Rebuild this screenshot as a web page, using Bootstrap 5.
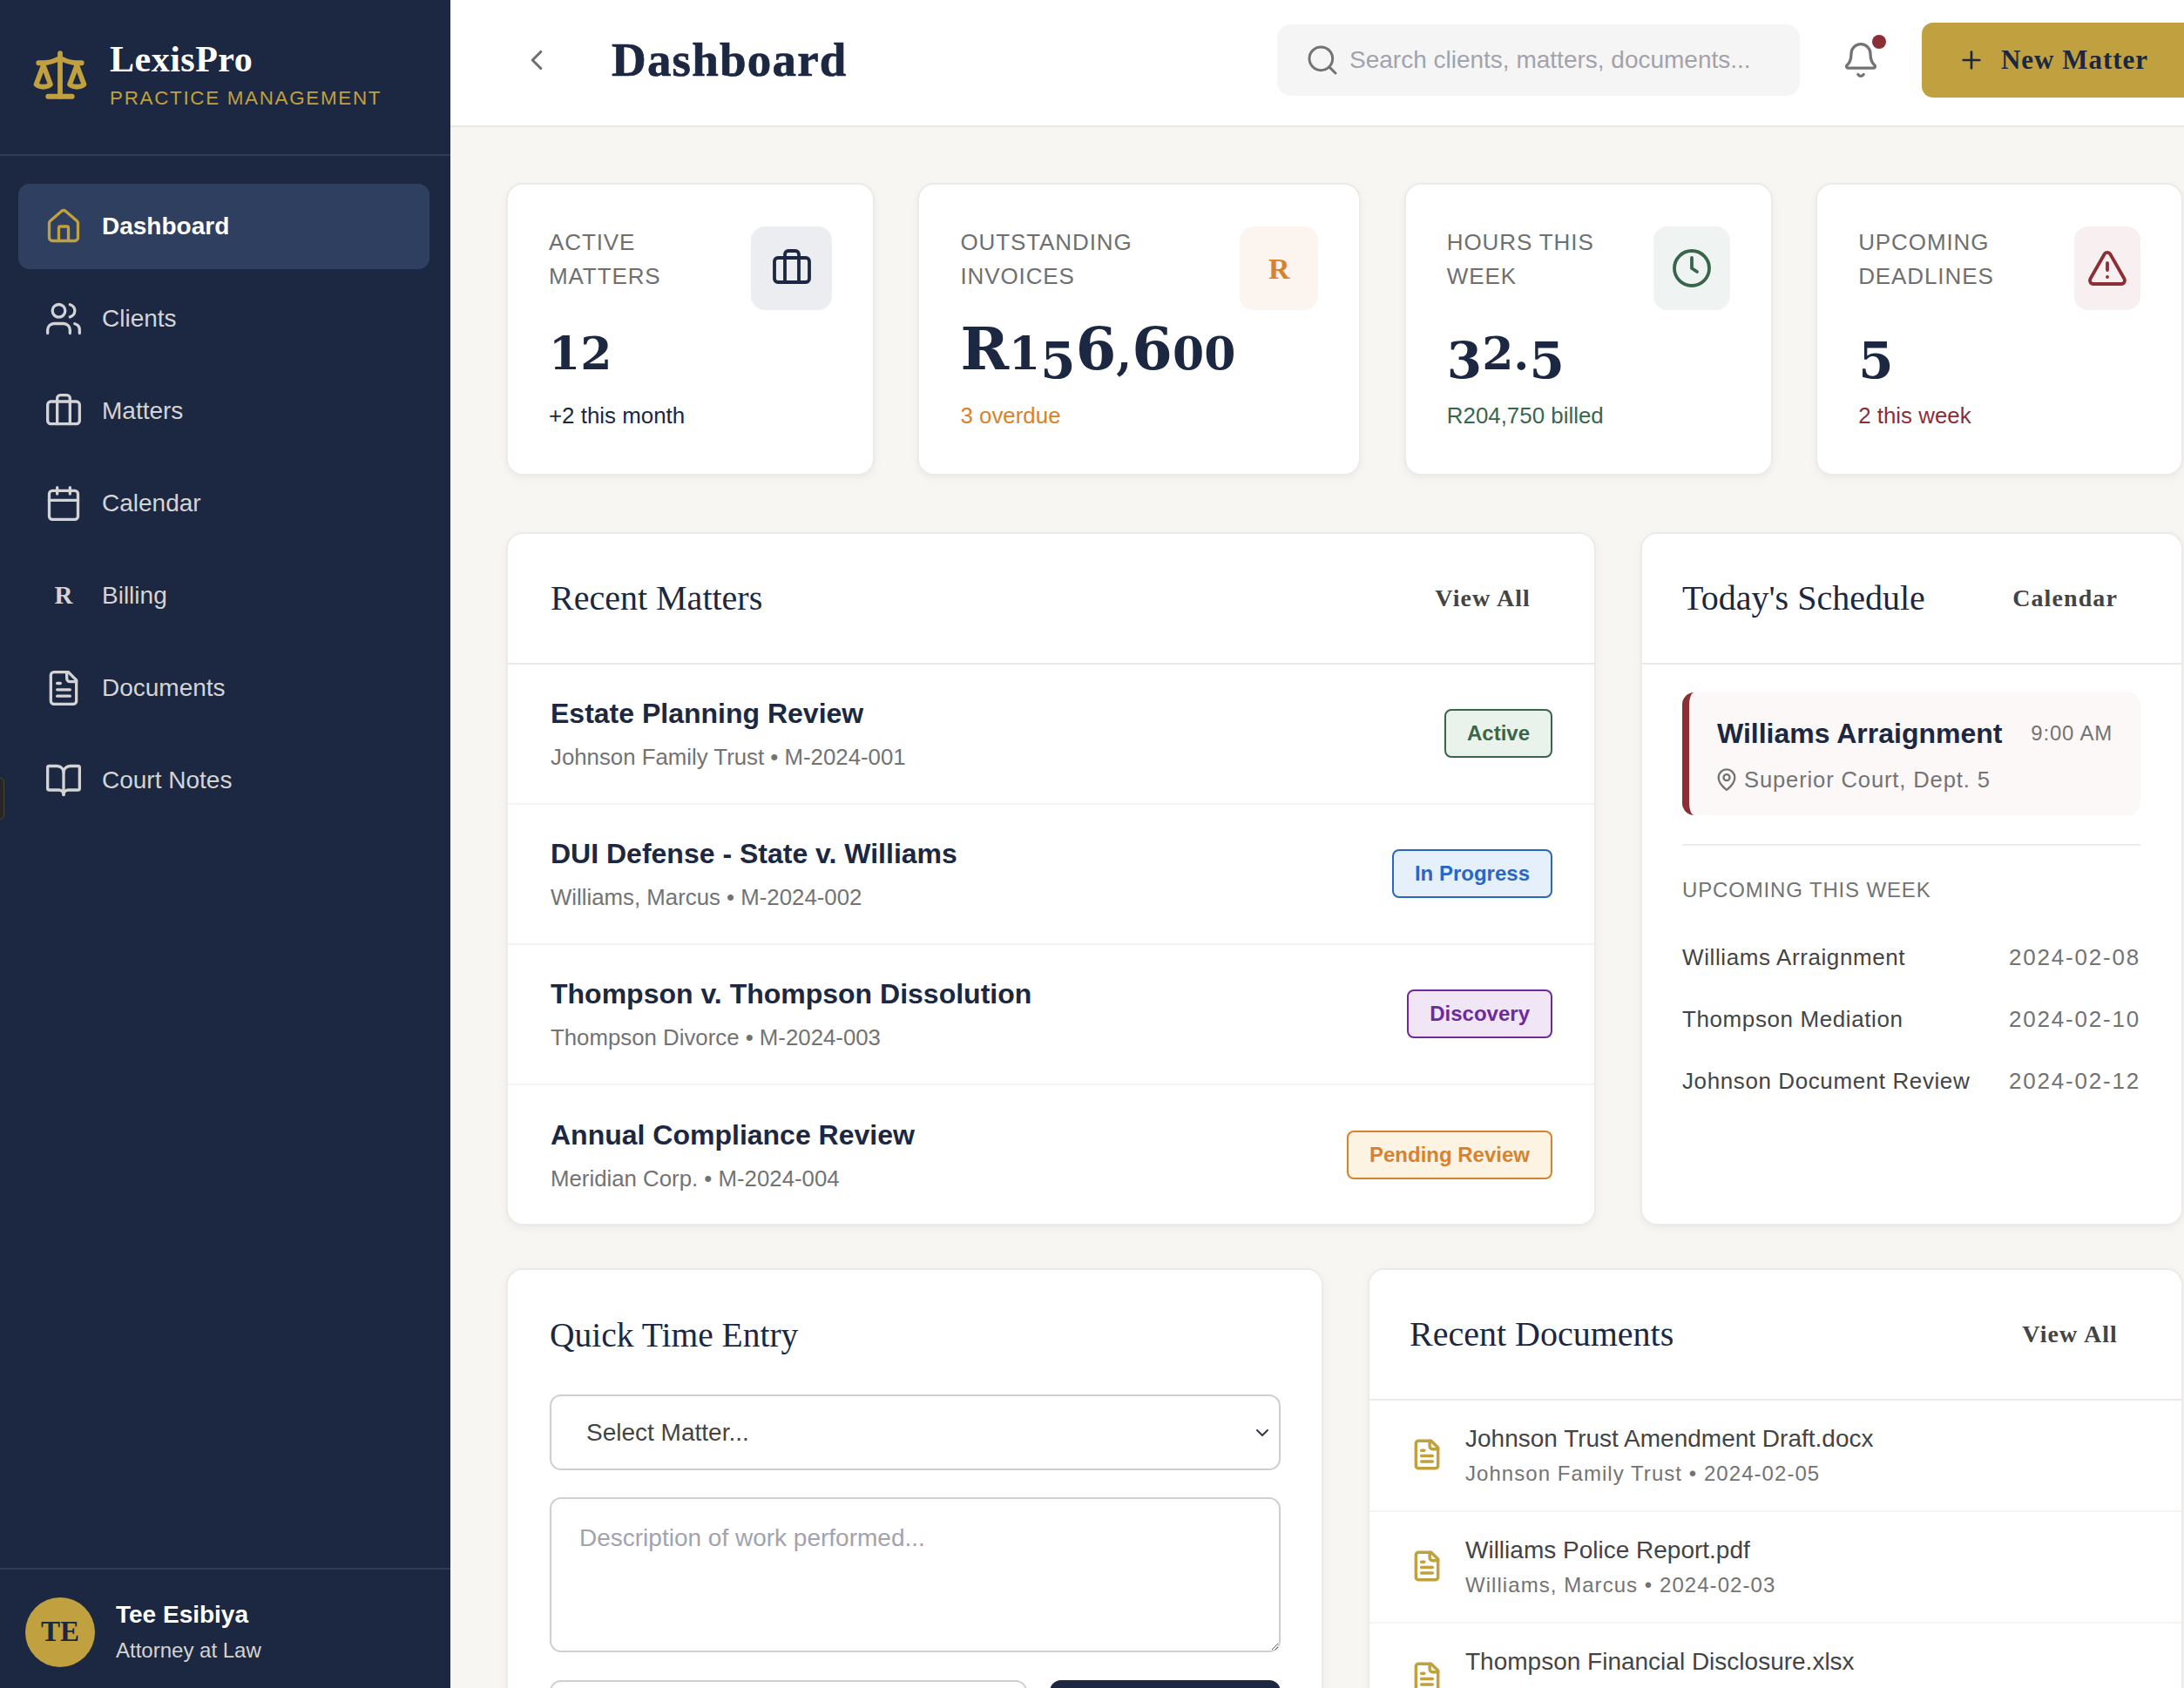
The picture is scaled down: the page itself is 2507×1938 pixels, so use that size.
<!DOCTYPE html>
<html lang="en">
<head>
    <meta charset="UTF-8">
    <title>LexisPro Dashboard</title>
    <link href="https://cdn.jsdelivr.net/npm/bootstrap@5.3.2/dist/css/bootstrap.min.css" rel="stylesheet">
    <style>
        html, body { height: 100%; overflow: hidden; }
        body {
            background: #f7f6f2;
            color: #1c2841;
            font-family: "Liberation Sans", Arial, sans-serif;
            font-size: 25.6px;
        }
        .serif { font-family: "Liberation Serif", "Times New Roman", serif; }
        .shell { width: 2507px; height: 1938px; }

        /* sidebar */
        .side { width: 517px; flex: none; background: #1c2841; height: 1938px; position: relative; }
        .brand { height: 179px; padding: 0 36px 6px; gap: 24px; border-bottom: 2px solid #2d3c5a; }
        .brand-name { font-size: 42px; font-weight: 700; color: #fff; line-height: 50px; letter-spacing: .5px; }
        .brand-sub { font-size: 22.4px; color: #c1a03f; letter-spacing: 1.7px; line-height: 30px; margin-top: 5px; }
        .side-nav { padding: 32px 24px 0 21px; gap: 8px; }
        .side-link {
            height: 98px; padding: 0 30px; gap: 22px;
            color: #d4d4d4; font-size: 28px; border-radius: 13px;
        }
        .side-link.active { background: #2f3f5f; color: #fff; font-weight: 700; }
        .side-link svg { color: #d4d4d4; }
        .side-link.active svg { color: #c1a03f; }
        .side-r { width: 44px; text-align: center; font-size: 29px; font-weight: 700; color: #d4d4d4; }
        .side-foot { margin-top: auto; height: 138px; padding: 7px 29px 0; gap: 24px; border-top: 2px solid #2d3c5a; }
        .avatar {
            width: 80px; height: 80px; background: #c1a03f; color: #1c2841;
            font-size: 33px; font-weight: 700;
        }
        .foot-name { color: #fff; font-weight: 700; font-size: 28px; line-height: 40px; }
        .foot-role { color: #d4d4d4; font-size: 24px; line-height: 36px; margin-top: 3px; }
        .stub {
            position: absolute; left: 0; top: 893px; width: 5px; height: 48px;
            background: #262626; border: 1px solid #4a4636; border-left: 0; border-radius: 0 5px 5px 0;
        }

        /* top bar */
        .main { width: 1990px; height: 1938px; flex: none; }
        .topbar { height: 146px; background: #fff; border-bottom: 2px solid #e9e8e5; padding: 0 0 6px 80px; }
        .page-title { font-size: 55px; font-weight: 700; letter-spacing: 1.2px; margin: 0 0 0 67px; color: #1c2841; -webkit-text-stroke: .7px #1c2841; }
        .search-box {
            width: 600px; height: 82px; margin-left: auto; padding: 0 32px; gap: 11px;
            background: #f5f5f5; border-radius: 16px; color: #a2a3ad; font-size: 28px;
        }
        .bell-wrap { width: 60px; height: 60px; margin-left: 40px; position: relative; }
        .bell-dot { position: absolute; top: 1px; right: 1px; width: 16px; height: 16px; background: #8b2e36; }
        .add-btn {
            width: 301px; height: 86px; margin-left: 40px; gap: 18px; flex: none; border: 0;
            background: #c1a03f; color: #1c2841; font-size: 31px; font-weight: 700; letter-spacing: 1px;
            border-radius: 13px 0 0 13px;
        }

        /* content */
        .content { padding: 64px 0 0 64px; }
        .stat-row { display: flex; gap: 49.4px; margin-bottom: 65px; }
        .pane {
            background: #fff; border: 2px solid #ecebe8; border-radius: 19px;
            box-shadow: 0 3px 10px rgba(0, 0, 0, .05);
        }
        .stat-pane { height: 336px; padding: 46px 47px 46px 47px; }
        .stat-label { font-size: 26px; line-height: 39px; letter-spacing: .9px; color: #6f6f6f; padding-top: 1px; }
        .stat-icon { height: 96px; flex: none; border-radius: 16px; margin-top: 2px; }
        .w-a { width: 423px; } .w-b { width: 509px; } .w-c { width: 423px; } .w-d { width: 422px; }
        .i-a { width: 93px; background: #ecedf0; color: #1c2841; }
        .i-b { width: 90px; background: #fcf5ef; color: #d9822b; font-size: 34px; font-weight: 700; }
        .i-c { width: 88px; background: #eff3f1; color: #38664b; }
        .i-d { width: 76px; background: #f7eff0; color: #8b2e36; }
        .stat-value {
            font-family: "DejaVu Serif", "Liberation Serif", serif; font-weight: 700;
            line-height: 70px; height: 70px; margin-top: 10px; font-size: 67px; white-space: nowrap;
        }
        .nx { font-size: 52px; line-height: 0; }
        .nd { font-size: 58px; line-height: 0; vertical-align: -.17em; }
        .nt { font-size: 67px; line-height: 0; }
        .stat-note { font-size: 25.9px; line-height: 36px; margin-top: 23px; }
        .note-b { color: #d9822b; } .note-c { color: #38664b; } .note-d { color: #8b2e36; }

        .mid-row { display: grid; grid-template-columns: 1251px 623px; gap: 51px; height: 796px; margin-bottom: 49px; }
        .low-row { display: grid; grid-template-columns: 938px 936px; gap: 51px; }
        .pane-head { height: 150px; padding: 0 73px 0 46px; border-bottom: 2px solid #ebebe9; }
        .pane-head.wide-in { padding-left: 49px; }
        .pane-title { font-size: 40px; font-weight: 400; color: #1c2841; margin: 0; }
        .pane-link { font-size: 28px; font-weight: 700; letter-spacing: 1.1px; color: #444; }

        .matter-row { height: 161px; padding: 0 48px 2px 49px; border-bottom: 2px solid #f4f4f3; }
        .matter-row:last-child { border-bottom: 0; }
        .matter-name { font-size: 32px; font-weight: 700; line-height: 42px; color: #1c2841; margin-bottom: 12px; }
        .matter-meta { font-size: 25.8px; line-height: 34px; color: #737373; }
        .tag {
            height: 56px; padding: 0 24px; font-size: 24px; font-weight: 700;
            border: 2px solid; border-radius: 8px; background: none;
        }
        .t-active { background: #e9f3ec; color: #38664b; border-color: #38664b; }
        .t-progress { background: #e5f0fb; color: #2b66c2; border-color: #2b66c2; }
        .t-discovery { background: #f0e6f5; color: #6e2a9c; border-color: #6e2a9c; }
        .t-pending { background: #fdf3e3; color: #d9822b; border-color: #d9822b; }

        .sched-body { padding: 32px 47px 0 46px; }
        .event-box { height: 141px; padding: 1px 32px 0 32px; background: #fdf8f8; border-left: 8px solid #8b2e36; border-radius: 14px; }
        .event-name { font-size: 32px; font-weight: 700; color: #1c2841; }
        .event-time { font-size: 24px; color: #737373; letter-spacing: .8px; }
        .event-place { font-size: 25.6px; color: #737373; gap: 6px; letter-spacing: .85px; margin-top: 10px; }
        .event-place svg { margin-left: -3px; }
        .rule { height: 2px; background: #ececea; margin: 33px 0 0; }
        .week-head { font-size: 24px; letter-spacing: .85px; color: #737373; margin-top: 35px; line-height: 32px; }
        .week-list { margin-top: 41px; gap: 30px; }
        .week-row { height: 41px; font-size: 26px; letter-spacing: .6px; color: #444; }
        .week-date { color: #737373; letter-spacing: 1.8px; }

        .form-pane { padding: 47px 47px 48px 48px; height: 700px; }
        .form-title { font-size: 39.5px; font-weight: 400; margin: 0 0 40px; line-height: 56px; }
        .pick {
            height: 87px; padding: 0 40px; font-size: 28px; color: #444;
            border: 2px solid #cfcfcf; border-radius: 13px;
            background-position: right 8px center; background-size: 22px 16px;
        }
        .desc {
            height: 178px; margin-top: 31px; padding: 24px 32px; font-size: 28px;
            border: 2px solid #cfcfcf; border-radius: 13px;
        }
        .desc::placeholder { color: #a2a3ad; }
        .last-row { margin-top: 32px; gap: 26px; }
        .hours-in { flex: 1; height: 87px; border: 2px solid #cfcfcf; border-radius: 13px; }
        .log-btn { width: 265px; height: 87px; background: #1c2841; border-radius: 13px; border: 0; }

        .doc-row { height: 128px; padding: 0 38px 2px 47px; gap: 25px; border-bottom: 2px solid #f4f4f3; }
        .doc-name { font-size: 28px; line-height: 38px; color: #444; }
        .doc-meta { font-size: 24px; line-height: 32px; min-height: 32px; color: #737373; letter-spacing: 1.05px; margin-top: 5px; }
    </style>
</head>
<body>
<div class="shell d-flex">
    <aside class="side d-flex flex-column">
        <div class="brand d-flex align-items-center">
            <svg width="66" height="66" viewBox="0 0 24 24" fill="none" stroke="#c1a03f" stroke-width="2.1" stroke-linecap="round" stroke-linejoin="round"><path d="m16 16 3-8 3 8c-.87.65-1.92 1-3 1s-2.13-.35-3-1Z"/><path d="m2 16 3-8 3 8c-.87.65-1.92 1-3 1s-2.13-.35-3-1Z"/><path d="M7 21h10"/><path d="M12 3v18"/><path d="M3 7h2c2 0 5-1 7-2 2 1 5 2 7 2h2"/></svg>
            <div>
                <div class="brand-name serif">LexisPro</div>
                <div class="brand-sub">PRACTICE MANAGEMENT</div>
            </div>
        </div>
        <nav class="nav flex-column side-nav">
            <a class="nav-link side-link active d-flex align-items-center" href="#">
                <svg width="44" height="44" viewBox="0 0 24 24" fill="none" stroke="currentColor" stroke-width="1.8" stroke-linecap="round" stroke-linejoin="round"><path d="M15 21v-8a1 1 0 0 0-1-1h-4a1 1 0 0 0-1 1v8"/><path d="M3 10a2 2 0 0 1 .709-1.528l7-5.999a2 2 0 0 1 2.582 0l7 5.999A2 2 0 0 1 21 10v9a2 2 0 0 1-2 2H5a2 2 0 0 1-2-2z"/></svg>
                Dashboard
            </a>
            <a class="nav-link side-link d-flex align-items-center" href="#">
                <svg width="44" height="44" viewBox="0 0 24 24" fill="none" stroke="currentColor" stroke-width="1.8" stroke-linecap="round" stroke-linejoin="round"><path d="M16 21v-2a4 4 0 0 0-4-4H6a4 4 0 0 0-4 4v2"/><circle cx="9" cy="7" r="4"/><path d="M22 21v-2a4 4 0 0 0-3-3.87"/><path d="M16 3.13a4 4 0 0 1 0 7.75"/></svg>
                Clients
            </a>
            <a class="nav-link side-link d-flex align-items-center" href="#">
                <svg width="44" height="44" viewBox="0 0 24 24" fill="none" stroke="currentColor" stroke-width="1.8" stroke-linecap="round" stroke-linejoin="round"><path d="M16 20V4a2 2 0 0 0-2-2h-4a2 2 0 0 0-2 2v16"/><rect width="20" height="14" x="2" y="6" rx="2"/></svg>
                Matters
            </a>
            <a class="nav-link side-link d-flex align-items-center" href="#">
                <svg width="44" height="44" viewBox="0 0 24 24" fill="none" stroke="currentColor" stroke-width="1.8" stroke-linecap="round" stroke-linejoin="round"><path d="M8 2v4"/><path d="M16 2v4"/><rect width="18" height="18" x="3" y="4" rx="2"/><path d="M3 10h18"/></svg>
                Calendar
            </a>
            <a class="nav-link side-link d-flex align-items-center" href="#">
                <span class="side-r serif">R</span>
                Billing
            </a>
            <a class="nav-link side-link d-flex align-items-center" href="#">
                <svg width="44" height="44" viewBox="0 0 24 24" fill="none" stroke="currentColor" stroke-width="1.8" stroke-linecap="round" stroke-linejoin="round"><path d="M15 2H6a2 2 0 0 0-2 2v16a2 2 0 0 0 2 2h12a2 2 0 0 0 2-2V7Z"/><path d="M14 2v4a2 2 0 0 0 2 2h4"/><path d="M10 9H8"/><path d="M16 13H8"/><path d="M16 17H8"/></svg>
                Documents
            </a>
            <a class="nav-link side-link d-flex align-items-center" href="#">
                <svg width="44" height="44" viewBox="0 0 24 24" fill="none" stroke="currentColor" stroke-width="1.8" stroke-linecap="round" stroke-linejoin="round"><path d="M12 7v14"/><path d="M3 18a1 1 0 0 1-1-1V4a1 1 0 0 1 1-1h5a4 4 0 0 1 4 4 4 4 0 0 1 4-4h5a1 1 0 0 1 1 1v13a1 1 0 0 1-1 1h-6a3 3 0 0 0-3 3 3 3 0 0 0-3-3z"/></svg>
                Court Notes
            </a>
        </nav>
        <div class="side-foot d-flex align-items-center">
            <div class="avatar serif rounded-circle d-flex align-items-center justify-content-center">TE</div>
            <div>
                <div class="foot-name">Tee Esibiya</div>
                <div class="foot-role">Attorney at Law</div>
            </div>
        </div>
        <div class="stub"></div>
    </aside>

    <div class="main overflow-hidden">
        <header class="topbar d-flex align-items-center">
            <svg width="38" height="38" viewBox="0 0 24 24" fill="none" stroke="#6f6f6f" stroke-width="2" stroke-linecap="round" stroke-linejoin="round"><path d="m15 18-6-6 6-6"/></svg>
            <h1 class="page-title serif">Dashboard</h1>
            <div class="search-box d-flex align-items-center">
                <svg width="40" height="40" viewBox="0 0 24 24" fill="none" stroke="#737373" stroke-width="1.8" stroke-linecap="round" stroke-linejoin="round"><circle cx="11" cy="11" r="8"/><path d="m21 21-4.3-4.3"/></svg>
                <span>Search clients, matters, documents...</span>
            </div>
            <div class="bell-wrap d-flex align-items-center justify-content-center">
                <svg width="44" height="44" viewBox="0 0 24 24" fill="none" stroke="#737373" stroke-width="1.8" stroke-linecap="round" stroke-linejoin="round"><path d="M10.268 21a2 2 0 0 0 3.464 0"/><path d="M3.262 15.326A1 1 0 0 0 4 17h16a1 1 0 0 0 .74-1.673C19.41 13.956 18 12.499 18 8A6 6 0 0 0 6 8c0 4.499-1.411 5.956-2.738 7.326"/></svg>
                <span class="bell-dot rounded-circle"></span>
            </div>
            <button class="btn add-btn serif d-flex align-items-center justify-content-center" type="button">
                <svg width="32" height="32" viewBox="0 0 24 24" fill="none" stroke="#1c2841" stroke-width="2" stroke-linecap="round"><path d="M5 12h14"/><path d="M12 5v14"/></svg>
                New Matter
            </button>
        </header>

        <div class="content">
            <div class="stat-row">
                <div class="pane stat-pane w-a">
                    <div class="d-flex justify-content-between gap-3">
                        <div class="stat-label">ACTIVE<br>MATTERS</div>
                        <div class="stat-icon i-a d-flex align-items-center justify-content-center">
                            <svg width="48" height="48" viewBox="0 0 24 24" fill="none" stroke="currentColor" stroke-width="1.9" stroke-linecap="round" stroke-linejoin="round"><path d="M16 20V4a2 2 0 0 0-2-2h-4a2 2 0 0 0-2 2v16"/><rect width="20" height="14" x="2" y="6" rx="2"/></svg>
                        </div>
                    </div>
                    <div class="stat-value"><span class="nx">12</span></div>
                    <div class="stat-note">+2 this month</div>
                </div>
                <div class="pane stat-pane w-b">
                    <div class="d-flex justify-content-between gap-3">
                        <div class="stat-label">OUTSTANDING<br>INVOICES</div>
                        <div class="stat-icon i-b serif d-flex align-items-center justify-content-center">R</div>
                    </div>
                    <div class="stat-value">R<span class="nx">1</span><span class="nd">5</span><span class="nt">6</span><span class="nx">,</span><span class="nt">6</span><span class="nx">00</span></div>
                    <div class="stat-note note-b">3 overdue</div>
                </div>
                <div class="pane stat-pane w-c">
                    <div class="d-flex justify-content-between gap-3">
                        <div class="stat-label">HOURS THIS<br>WEEK</div>
                        <div class="stat-icon i-c d-flex align-items-center justify-content-center">
                            <svg width="48" height="48" viewBox="0 0 24 24" fill="none" stroke="currentColor" stroke-width="1.9" stroke-linecap="round" stroke-linejoin="round"><circle cx="12" cy="12" r="10"/><path d="M12 6v6l3 2"/></svg>
                        </div>
                    </div>
                    <div class="stat-value"><span class="nd">3</span><span class="nx">2</span><span class="nx">.</span><span class="nd">5</span></div>
                    <div class="stat-note note-c">R204,750 billed</div>
                </div>
                <div class="pane stat-pane w-d">
                    <div class="d-flex justify-content-between gap-3">
                        <div class="stat-label">UPCOMING<br>DEADLINES</div>
                        <div class="stat-icon i-d d-flex align-items-center justify-content-center">
                            <svg width="48" height="48" viewBox="0 0 24 24" fill="none" stroke="currentColor" stroke-width="1.9" stroke-linecap="round" stroke-linejoin="round"><path d="m21.73 18-8-14a2 2 0 0 0-3.48 0l-8 14A2 2 0 0 0 4 21h16a2 2 0 0 0 1.73-3"/><path d="M12 9v4"/><path d="M12 17h.01"/></svg>
                        </div>
                    </div>
                    <div class="stat-value"><span class="nd">5</span></div>
                    <div class="stat-note note-d">2 this week</div>
                </div>
            </div>

            <div class="mid-row">
                <section class="pane overflow-hidden">
                    <div class="pane-head wide-in d-flex align-items-center justify-content-between">
                        <h2 class="pane-title serif">Recent Matters</h2>
                        <a class="pane-link serif text-decoration-none" href="#">View All</a>
                    </div>
                    <div class="matter-row d-flex align-items-center justify-content-between">
                        <div><div class="matter-name">Estate Planning Review</div><div class="matter-meta">Johnson Family Trust • M-2024-001</div></div>
                        <span class="tag t-active d-flex align-items-center">Active</span>
                    </div>
                    <div class="matter-row d-flex align-items-center justify-content-between">
                        <div><div class="matter-name">DUI Defense - State v. Williams</div><div class="matter-meta">Williams, Marcus • M-2024-002</div></div>
                        <span class="tag t-progress d-flex align-items-center">In Progress</span>
                    </div>
                    <div class="matter-row d-flex align-items-center justify-content-between">
                        <div><div class="matter-name">Thompson v. Thompson Dissolution</div><div class="matter-meta">Thompson Divorce • M-2024-003</div></div>
                        <span class="tag t-discovery d-flex align-items-center">Discovery</span>
                    </div>
                    <div class="matter-row d-flex align-items-center justify-content-between">
                        <div><div class="matter-name">Annual Compliance Review</div><div class="matter-meta">Meridian Corp. • M-2024-004</div></div>
                        <span class="tag t-pending d-flex align-items-center">Pending Review</span>
                    </div>
                </section>

                <section class="pane overflow-hidden">
                    <div class="pane-head d-flex align-items-center justify-content-between">
                        <h2 class="pane-title serif">Today's Schedule</h2>
                        <a class="pane-link serif text-decoration-none" href="#">Calendar</a>
                    </div>
                    <div class="sched-body">
                        <div class="event-box d-flex flex-column justify-content-center">
                            <div class="d-flex justify-content-between align-items-center">
                                <span class="event-name">Williams Arraignment</span>
                                <span class="event-time">9:00 AM</span>
                            </div>
                            <div class="event-place d-flex align-items-center">
                                <svg width="28" height="28" viewBox="0 0 24 24" fill="none" stroke="currentColor" stroke-width="2" stroke-linecap="round" stroke-linejoin="round"><path d="M20 10c0 4.993-5.539 10.193-7.399 11.799a1 1 0 0 1-1.202 0C9.539 20.193 4 14.993 4 10a8 8 0 0 1 16 0"/><circle cx="12" cy="10" r="3"/></svg>
                                Superior Court, Dept. 5
                            </div>
                        </div>
                        <div class="rule"></div>
                        <div class="week-head">UPCOMING THIS WEEK</div>
                        <div class="week-list d-flex flex-column">
                            <div class="week-row d-flex justify-content-between align-items-center"><span>Williams Arraignment</span><span class="week-date">2024-02-08</span></div>
                            <div class="week-row d-flex justify-content-between align-items-center"><span>Thompson Mediation</span><span class="week-date">2024-02-10</span></div>
                            <div class="week-row d-flex justify-content-between align-items-center"><span>Johnson Document Review</span><span class="week-date">2024-02-12</span></div>
                        </div>
                    </div>
                </section>
            </div>

            <div class="low-row">
                <section class="pane form-pane">
                    <h2 class="form-title serif">Quick Time Entry</h2>
                    <select class="form-select pick"><option>Select Matter...</option></select>
                    <textarea class="form-control desc" placeholder="Description of work performed..."></textarea>
                    <div class="last-row d-flex">
                        <div class="hours-in"></div>
                        <button class="btn log-btn" type="button"></button>
                    </div>
                </section>
                <section class="pane">
                    <div class="pane-head d-flex align-items-center justify-content-between">
                        <h2 class="pane-title serif">Recent Documents</h2>
                        <a class="pane-link serif text-decoration-none" href="#">View All</a>
                    </div>
                    <div class="doc-row d-flex align-items-center">
                        <svg width="38" height="38" viewBox="0 0 24 24" fill="none" stroke="#c1a03f" stroke-width="2.2" stroke-linecap="round" stroke-linejoin="round"><path d="M15 2H6a2 2 0 0 0-2 2v16a2 2 0 0 0 2 2h12a2 2 0 0 0 2-2V7Z"/><path d="M14 2v4a2 2 0 0 0 2 2h4"/><path d="M10 9H8"/><path d="M16 13H8"/><path d="M16 17H8"/></svg>
                        <div><div class="doc-name">Johnson Trust Amendment Draft.docx</div><div class="doc-meta">Johnson Family Trust • 2024-02-05</div></div>
                    </div>
                    <div class="doc-row d-flex align-items-center">
                        <svg width="38" height="38" viewBox="0 0 24 24" fill="none" stroke="#c1a03f" stroke-width="2.2" stroke-linecap="round" stroke-linejoin="round"><path d="M15 2H6a2 2 0 0 0-2 2v16a2 2 0 0 0 2 2h12a2 2 0 0 0 2-2V7Z"/><path d="M14 2v4a2 2 0 0 0 2 2h4"/><path d="M10 9H8"/><path d="M16 13H8"/><path d="M16 17H8"/></svg>
                        <div><div class="doc-name">Williams Police Report.pdf</div><div class="doc-meta">Williams, Marcus • 2024-02-03</div></div>
                    </div>
                    <div class="doc-row d-flex align-items-center">
                        <svg width="38" height="38" viewBox="0 0 24 24" fill="none" stroke="#c1a03f" stroke-width="2.2" stroke-linecap="round" stroke-linejoin="round"><path d="M15 2H6a2 2 0 0 0-2 2v16a2 2 0 0 0 2 2h12a2 2 0 0 0 2-2V7Z"/><path d="M14 2v4a2 2 0 0 0 2 2h4"/><path d="M10 9H8"/><path d="M16 13H8"/><path d="M16 17H8"/></svg>
                        <div><div class="doc-name">Thompson Financial Disclosure.xlsx</div><div class="doc-meta"></div></div>
                    </div>
                </section>
            </div>
        </div>
    </div>
</div>
<script src="https://cdn.jsdelivr.net/npm/bootstrap@5.3.2/dist/js/bootstrap.bundle.min.js"></script>
</body>
</html>
